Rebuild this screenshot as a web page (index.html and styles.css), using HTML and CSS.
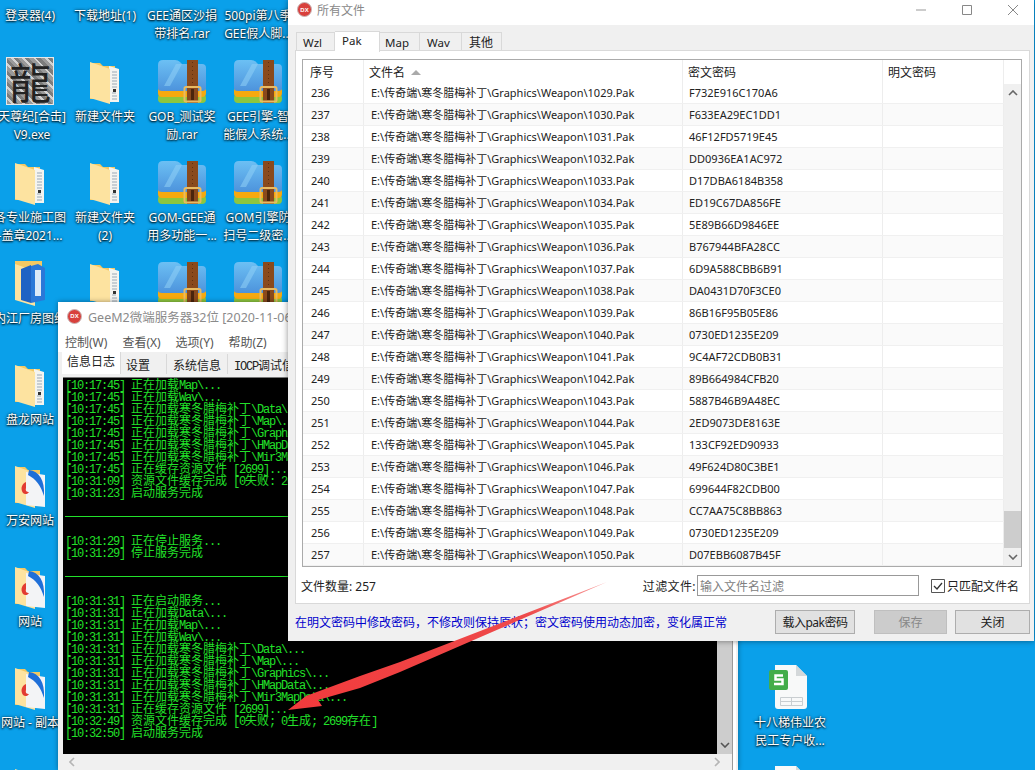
FILE: index.html
```html
<!DOCTYPE html>
<html lang="zh-CN">
<head>
<meta charset="utf-8">
<title>所有文件</title>
<link rel="stylesheet" href="styles.css">
</head>
<body>
<svg class="defs" width="0" height="0" aria-hidden="true">
  <defs>
    <linearGradient id="rarBlue" x1="0" y1="0" x2="0" y2="1"><stop offset="0" stop-color="#6cc0f4"/><stop offset="1" stop-color="#4d93dc"/></linearGradient>
    <symbol id="folder" viewBox="0 0 48 48">
      <path d="M9 5h10l3 3h12v33H9z" fill="#f3c863"/>
      <path d="M28 8l10 3v33H28z" fill="#f4f4f0"/>
      <path d="M31 14h5M31 17h5M31 20h5M31 23h5M31 26h5M31 29h5M31 35h4M31 38h5M31 41h5" stroke="#9aa7b5" stroke-width="1.2"/>
      <path d="M32 31h3v3h-3z" fill="#333"/>
      <path d="M9 4l20 7v35L9 40z" fill="#fde3a0"/>
    </symbol>
    <symbol id="rar" viewBox="0 0 48 48">
      <rect x="0" y="36" width="48" height="9" rx="4" fill="#8dc63f"/>
      <rect x="0" y="29" width="48" height="10" rx="4" fill="#f6a90f"/>
      <path d="M0 7q0-5 5-5h12q3 0 5 2l2 2h20q4 0 4 4v20q0 3-4 3H4q-4 0-4-3z" fill="url(#rarBlue)"/>
      <path d="M18 6L6 28h6L24 6z" fill="#8fd0f6" opacity=".55"/>
      <rect x="29" y="2" width="11" height="43" fill="#8a4a1c"/>
      <path d="M34.500 4v22" stroke="#5d2f10" stroke-dasharray="1 3"/>
      <rect x="26.500" y="29" width="16" height="14.500" rx="1.500" fill="none" stroke="#e9bb62" stroke-width="2"/>
      <rect x="33" y="31" width="3" height="11" fill="#4a240c"/>
    </symbol>
    <symbol id="site" viewBox="0 0 48 48">
      <path d="M9 5h10l3 3h12v33H9z" fill="#f3c863"/>
      <path d="M9 4l20 7v35L9 40z" fill="#fde3a0"/>
      <path d="M20 10l19 3v32l-19-2z" fill="#f3f4f6"/>
      <path d="M23 8c10 1 16 10 15 26-3-10-8-17-16-21z" fill="#1f6fd8"/>
      <path d="M20 20c-4 2-6 6-3 11 2 2 5 1 6-1-2 0-4-1-3-4z" fill="#e23b32"/>
    </symbol>
    <symbol id="docs" viewBox="0 0 48 48">
      <path d="M9 1h27v34H9z" fill="#f3c863"/>
      <path d="M9 4l20 7v35L9 40z" fill="#fde3a0"/>
      <path d="M15 9l10-4v38l-10-3z" fill="#1f63c4"/>
      <path d="M25 6l7-2 7 4v32l-14 3z" fill="#2a78d8"/>
      <path d="M29 10h6v26h-6z" fill="#dbe9f8"/>
    </symbol>
    <symbol id="sheet" viewBox="0 0 48 48">
      <path d="M9 1h21l11 11v30q0 3-3 3H12q-3 0-3-3z" fill="#f8f9f9"/>
      <path d="M30 1l11 11H30z" fill="#d4d8da"/>
      <rect x="3" y="6" width="19" height="20" rx="2" fill="#43ad4a"/>
      <path d="M17 11.500H9.500v4h7v4.500H8" fill="none" stroke="#fff" stroke-width="2.500"/>
      <path d="M14.500 33.500h22v8h-22zM14.500 37.500h22M25.500 33.500v8" fill="none" stroke="#c9ced1"/>
    </symbol>
  </defs>
</svg>

<main class="desktop">
  <div class="tile c1 r1"><span class="label">登录器(4)</span></div>
  <div class="tile c2 r1"><span class="label">下载地址(1)</span></div>
  <div class="tile c3 r1"><span class="label">GEE通区沙捐<br>带排名.rar</span></div>
  <div class="tile c4 r1"><span class="label">500pi第八季<br>GEE假人脚...</span></div>

  <div class="tile c1 r2"><div class="dragon">龍</div><span class="label nudge">天尊纪[合击]<br>V9.exe</span></div>
  <div class="tile c2 r2"><svg class="ico"><use href="#folder"/></svg><span class="label">新建文件夹</span></div>
  <div class="tile c3 r2"><svg class="ico"><use href="#rar"/></svg><span class="label">GOB_测试奖<br>励.rar</span></div>
  <div class="tile c4 r2"><svg class="ico"><use href="#rar"/></svg><span class="label">GEE引擎-智<br>能假人系统...</span></div>

  <div class="tile c1 r3"><svg class="ico"><use href="#folder"/></svg><span class="label">各专业施工图<br>-盖章2021...</span></div>
  <div class="tile c2 r3"><svg class="ico"><use href="#folder"/></svg><span class="label">新建文件夹<br>(2)</span></div>
  <div class="tile c3 r3"><svg class="ico"><use href="#rar"/></svg><span class="label">GOM-GEE通<br>用多功能一...</span></div>
  <div class="tile c4 r3"><svg class="ico"><use href="#rar"/></svg><span class="label">GOM引擎防<br>扫号二级密...</span></div>

  <div class="tile c1 r4"><svg class="ico"><use href="#docs"/></svg><span class="label">内江厂房图纸</span></div>
  <div class="tile c2 r4"><svg class="ico"><use href="#folder"/></svg></div>
  <div class="tile c3 r4"><svg class="ico"><use href="#rar"/></svg></div>
  <div class="tile c4 r4"><svg class="ico"><use href="#rar"/></svg></div>

  <div class="tile c1 r5"><svg class="ico"><use href="#folder"/></svg><span class="label">盘龙网站</span></div>
  <div class="tile c1 r6"><svg class="ico"><use href="#site"/></svg><span class="label">万安网站</span></div>
  <div class="tile c1 r7"><svg class="ico"><use href="#site"/></svg><span class="label">网站</span></div>
  <div class="tile c1 r8"><svg class="ico"><use href="#site"/></svg><span class="label">网站 - 副本</span></div>
  <div class="tile c1 r9"><svg class="ico"><use href="#folder"/></svg></div>
  <div class="tile c5 r8"><svg class="ico"><use href="#sheet"/></svg><span class="label">十八梯伟业农<br>民工专户收...</span></div>
  <div class="tile c5 r9"><svg class="ico"><use href="#sheet"/></svg></div>

  <section class="server">
    <header class="server-title"><span class="dx">DX</span><span>GeeM2微端服务器32位 [2020-11-06</span></header>
    <nav class="server-menu"><span>控制(W)</span><span>查看(X)</span><span>选项(Y)</span><span>帮助(Z)</span></nav>
    <div class="server-tabs">
      <span class="stab stab-on">信息日志</span><span class="stab stab-2">设置</span><span class="stab stab-3">系统信息</span><span class="stab stab-4"><span class="mono">IOCP</span>调试信息</span>
    </div>
    <div class="server-body">
      <div class="console">
        <div class="l">[10:17:45] <b>正在加载</b>Map\...</div>
        <div class="l">[10:17:45] <b>正在加载</b>Wav\...</div>
        <div class="l">[10:17:45] <b>正在加载寒冬腊梅补丁</b>\Data\...</div>
        <div class="l">[10:17:45] <b>正在加载寒冬腊梅补丁</b>\Map\...</div>
        <div class="l">[10:17:45] <b>正在加载寒冬腊梅补丁</b>\Graphics\...</div>
        <div class="l">[10:17:45] <b>正在加载寒冬腊梅补丁</b>\HMapData\...</div>
        <div class="l">[10:17:45] <b>正在加载寒冬腊梅补丁</b>\Mir3MapData\...</div>
        <div class="l">[10:17:45] <b>正在缓存资源文件</b> [2699]...</div>
        <div class="l">[10:31:09] <b>资源文件缓存完成</b> [0<b>失败</b>: 2699<b>生成</b>]</div>
        <div class="l">[10:31:23] <b>启动服务完成</b></div>
        <div class="l"></div>
        <div class="l rule"></div>
        <div class="l"></div>
        <div class="l">[10:31:29] <b>正在停止服务</b>...</div>
        <div class="l">[10:31:29] <b>停止服务完成</b></div>
        <div class="l"></div>
        <div class="l rule"></div>
        <div class="l"></div>
        <div class="l">[10:31:31] <b>正在启动服务</b>...</div>
        <div class="l">[10:31:31] <b>正在加载</b>Data\...</div>
        <div class="l">[10:31:31] <b>正在加载</b>Map\...</div>
        <div class="l">[10:31:31] <b>正在加载</b>Wav\...</div>
        <div class="l">[10:31:31] <b>正在加载寒冬腊梅补丁</b>\Data\...</div>
        <div class="l">[10:31:31] <b>正在加载寒冬腊梅补丁</b>\Map\...</div>
        <div class="l">[10:31:31] <b>正在加载寒冬腊梅补丁</b>\Graphics\...</div>
        <div class="l">[10:31:31] <b>正在加载寒冬腊梅补丁</b>\HMapData\...</div>
        <div class="l">[10:31:31] <b>正在加载寒冬腊梅补丁</b>\Mir3MapData\...</div>
        <div class="l">[10:31:31] <b>正在缓存资源文件</b> [2699]...</div>
        <div class="l">[10:32:49] <b>资源文件缓存完成</b> [0<b>失败</b>; 0<b>生成</b>; 2699<b>存在</b>]</div>
        <div class="l">[10:32:50] <b>启动服务完成</b></div>
      </div>
      <div class="vbar"><svg class="chev" width="10" height="6" viewBox="0 0 10 6"><path d="M1 1l4 4 4-4" fill="none" stroke="#555" stroke-width="1.600"/></svg></div>
    </div>
    <div class="hbar">
      <svg width="6" height="10" viewBox="0 0 6 10"><path d="M5 1L1 5l4 4" fill="none" stroke="#b5b5b5" stroke-width="1.600"/></svg>
      <svg width="6" height="10" viewBox="0 0 6 10"><path d="M1 1l4 4-4 4" fill="none" stroke="#b5b5b5" stroke-width="1.600"/></svg>
    </div>
  </section>

  <section class="files">
    <header class="titlebar">
      <span class="dx">DX</span><span class="title-text">所有文件</span>
      <span class="winbtns">
        <svg width="12" height="12" viewBox="0 0 12 12"><path d="M1 6h10" stroke="#999"/></svg>
        <svg width="12" height="12" viewBox="0 0 12 12"><path d="M1.500 1.500h9v9h-9z" fill="none" stroke="#888"/></svg>
        <svg width="12" height="12" viewBox="0 0 12 12"><path d="M1 1l10 10M11 1L1 11" stroke="#888"/></svg>
      </span>
    </header>
    <div class="files-body">
      <div class="tabs">
        <span class="tab tab-wzl">Wzl</span><span class="tab tab-on">Pak</span><span class="tab tab-map">Map</span><span class="tab tab-wav">Wav</span><span class="tab tab-oth">其他</span>
      </div>
      <div class="panel">
        <div class="list">
          <div class="table">
            <div class="row head"><span class="c-no">序号</span><span class="c-name">文件名<i class="sort"></i></span><span class="c-enc">密文密码</span><span class="c-plain">明文密码</span></div>
            <div class="row"><span class="c-no">236</span><span class="c-name">E:\传奇端\寒冬腊梅补丁\Graphics\Weapon\1029.Pak</span><span class="c-enc">F732E916C170A6</span><span class="c-plain"></span></div>
            <div class="row"><span class="c-no">237</span><span class="c-name">E:\传奇端\寒冬腊梅补丁\Graphics\Weapon\1030.Pak</span><span class="c-enc">F633EA29EC1DD1</span><span class="c-plain"></span></div>
            <div class="row"><span class="c-no">238</span><span class="c-name">E:\传奇端\寒冬腊梅补丁\Graphics\Weapon\1031.Pak</span><span class="c-enc">46F12FD5719E45</span><span class="c-plain"></span></div>
            <div class="row"><span class="c-no">239</span><span class="c-name">E:\传奇端\寒冬腊梅补丁\Graphics\Weapon\1032.Pak</span><span class="c-enc">DD0936EA1AC972</span><span class="c-plain"></span></div>
            <div class="row"><span class="c-no">240</span><span class="c-name">E:\传奇端\寒冬腊梅补丁\Graphics\Weapon\1033.Pak</span><span class="c-enc">D17DBA6184B358</span><span class="c-plain"></span></div>
            <div class="row"><span class="c-no">241</span><span class="c-name">E:\传奇端\寒冬腊梅补丁\Graphics\Weapon\1034.Pak</span><span class="c-enc">ED19C67DA856FE</span><span class="c-plain"></span></div>
            <div class="row"><span class="c-no">242</span><span class="c-name">E:\传奇端\寒冬腊梅补丁\Graphics\Weapon\1035.Pak</span><span class="c-enc">5E89B66D9846EE</span><span class="c-plain"></span></div>
            <div class="row"><span class="c-no">243</span><span class="c-name">E:\传奇端\寒冬腊梅补丁\Graphics\Weapon\1036.Pak</span><span class="c-enc">B767944BFA28CC</span><span class="c-plain"></span></div>
            <div class="row"><span class="c-no">244</span><span class="c-name">E:\传奇端\寒冬腊梅补丁\Graphics\Weapon\1037.Pak</span><span class="c-enc">6D9A588CBB6B91</span><span class="c-plain"></span></div>
            <div class="row"><span class="c-no">245</span><span class="c-name">E:\传奇端\寒冬腊梅补丁\Graphics\Weapon\1038.Pak</span><span class="c-enc">DA0431D70F3CE0</span><span class="c-plain"></span></div>
            <div class="row"><span class="c-no">246</span><span class="c-name">E:\传奇端\寒冬腊梅补丁\Graphics\Weapon\1039.Pak</span><span class="c-enc">86B16F95B05E86</span><span class="c-plain"></span></div>
            <div class="row"><span class="c-no">247</span><span class="c-name">E:\传奇端\寒冬腊梅补丁\Graphics\Weapon\1040.Pak</span><span class="c-enc">0730ED1235E209</span><span class="c-plain"></span></div>
            <div class="row"><span class="c-no">248</span><span class="c-name">E:\传奇端\寒冬腊梅补丁\Graphics\Weapon\1041.Pak</span><span class="c-enc">9C4AF72CDB0B31</span><span class="c-plain"></span></div>
            <div class="row"><span class="c-no">249</span><span class="c-name">E:\传奇端\寒冬腊梅补丁\Graphics\Weapon\1042.Pak</span><span class="c-enc">89B664984CFB20</span><span class="c-plain"></span></div>
            <div class="row"><span class="c-no">250</span><span class="c-name">E:\传奇端\寒冬腊梅补丁\Graphics\Weapon\1043.Pak</span><span class="c-enc">5887B46B9A48EC</span><span class="c-plain"></span></div>
            <div class="row"><span class="c-no">251</span><span class="c-name">E:\传奇端\寒冬腊梅补丁\Graphics\Weapon\1044.Pak</span><span class="c-enc">2ED9073DE8163E</span><span class="c-plain"></span></div>
            <div class="row"><span class="c-no">252</span><span class="c-name">E:\传奇端\寒冬腊梅补丁\Graphics\Weapon\1045.Pak</span><span class="c-enc">133CF92ED90933</span><span class="c-plain"></span></div>
            <div class="row"><span class="c-no">253</span><span class="c-name">E:\传奇端\寒冬腊梅补丁\Graphics\Weapon\1046.Pak</span><span class="c-enc">49F624D80C3BE1</span><span class="c-plain"></span></div>
            <div class="row"><span class="c-no">254</span><span class="c-name">E:\传奇端\寒冬腊梅补丁\Graphics\Weapon\1047.Pak</span><span class="c-enc">699644F82CDB00</span><span class="c-plain"></span></div>
            <div class="row"><span class="c-no">255</span><span class="c-name">E:\传奇端\寒冬腊梅补丁\Graphics\Weapon\1048.Pak</span><span class="c-enc">CC7AA75C8BB863</span><span class="c-plain"></span></div>
            <div class="row"><span class="c-no">256</span><span class="c-name">E:\传奇端\寒冬腊梅补丁\Graphics\Weapon\1049.Pak</span><span class="c-enc">0730ED1235E209</span><span class="c-plain"></span></div>
            <div class="row"><span class="c-no">257</span><span class="c-name">E:\传奇端\寒冬腊梅补丁\Graphics\Weapon\1050.Pak</span><span class="c-enc">D07EBB6087B45F</span><span class="c-plain"></span></div>
          </div>
          <div class="scroll">
            <svg class="chev" width="10" height="6" viewBox="0 0 10 6"><path d="M1 5l4-4 4 4" fill="none" stroke="#666" stroke-width="1.600"/></svg>
            <span class="thumb"></span>
            <svg class="chev" width="10" height="6" viewBox="0 0 10 6"><path d="M1 1l4 4 4-4" fill="none" stroke="#666" stroke-width="1.600"/></svg>
          </div>
        </div>
        <div class="status">
          <span class="count">文件数量: 257</span>
          <label class="filter-label" for="flt">过滤文件:</label>
          <input class="filter" id="flt" placeholder="输入文件名过滤">
          <span class="check"><svg width="14" height="14" viewBox="0 0 14 14"><path d="M.5.500h13v13H.5z" fill="#fff" stroke="#555"/><path d="M3 7l3 3 5-6" fill="none" stroke="#333" stroke-width="1.300"/></svg>只匹配文件名</span>
        </div>
      </div>
      <div class="footer">
        <span class="hint">在明文密码中修改密码，不修改则保持原状；密文密码使用动态加密，变化属正常</span>
        <button class="btn btn-load">载入pak密码</button>
        <button class="btn btn-save" disabled>保存</button>
        <button class="btn btn-close">关闭</button>
      </div>
    </div>
  </section>

  <svg class="arrow" width="1035" height="770" viewBox="0 0 1035 770" aria-hidden="true">
    <defs><linearGradient id="tail" x1="1" y1="0" x2="0" y2="1"><stop offset="0" stop-color="#f9a0a0"/><stop offset=".25" stop-color="#ee4a4a"/><stop offset="1" stop-color="#f23a3c"/></linearGradient></defs>
    <polygon points="607,582 400,662 360,676 306,696 288,710 322,706 318,700 360,688 400,672" fill="url(#tail)"/>
  </svg>
</main>
</body>
</html>
```
FILE: styles.css
```css
* { box-sizing: border-box; }
html, body { margin: 0; height: 100%; }
body { overflow: hidden; font-family: "Noto Sans", "Noto Sans CJK SC", sans-serif; font-size: 12px; color: #222; }
.defs { position: absolute; }

.desktop { position: relative; width: 1035px; height: 770px; overflow: hidden; background: #0aa0ea; }

/* desktop icons sit on a free canvas */
.tile { position: absolute; width: 80px; display: flex; flex-direction: column; align-items: center; }
.c1 { left: -10px; } .c2 { left: 65px; } .c3 { left: 142px; } .c4 { left: 218px; } .c5 { left: 750px; }
.r1 { top: -45px; } .r2 { top: 56px; } .r3 { top: 157px; } .r4 { top: 258px; } .r5 { top: 359px; }
.r6 { top: 460px; } .r7 { top: 561px; } .r8 { top: 662px; } .r9 { top: 763px; }
.ico { width: 48px; height: 48px; margin-top: 2px; margin-bottom: 2px; flex: none; }
.label { display: block; width: 90px; flex: none; text-align: center; line-height: 18px; color: #fff; white-space: nowrap; text-shadow: 0 1px 2px #000, 0 0 3px rgba(0,0,0,.7); }
.tile > .label:first-child { margin-top: 52px; }
.nudge { padding-left: 4px; }
.dragon { width: 48px; height: 48px; margin-top: 1px; margin-bottom: 3px; background: repeating-linear-gradient(45deg, #9a9a9a 0 3px, #d2d2d2 3px 5px, #7c7c7c 5px 8px); border: 1px solid #e8e8e8; color: #222; font: 400 42px/46px "Noto Sans CJK TC", sans-serif; text-align: center; overflow: hidden; }

.dx { display: inline-flex; align-items: center; justify-content: center; width: 15px; height: 15px; border-radius: 50%; background: #d8403c; border: 1px solid #c9b6b6; color: #fff; font: 700 6px/1 "Liberation Sans", sans-serif; flex: none; }

/* back window */
.server { position: absolute; left: 58px; top: 302px; width: 680px; height: 468px; background: #f0f0f0; box-shadow: 0 0 5px rgba(0,0,0,.4); display: flex; flex-direction: column; }
.server-title { height: 28px; background: #fff; display: flex; align-items: center; gap: 6px; padding: 0 0 0 9px; color: #8a8a8a; font-size: 12.500px; white-space: nowrap; overflow: hidden; flex: none; }
.server-menu { height: 22px; background: #fff; display: flex; gap: 15px; align-items: center; padding: 2px 0 0 7px; color: #555; flex: none; }
.server-tabs { height: 22px; display: flex; align-items: flex-end; padding-left: 4px; background: #f0f0f0; flex: none; overflow: hidden; }
.stab { height: 20px; line-height: 23px; text-align: center; background: #f0f0f0; border-right: 1px solid #d9d9d9; color: #222; flex: none; white-space: nowrap; }
.stab-on { height: 22px; width: 59px; line-height: 20px; background: #fff; }
.stab-2 { width: 46px; text-align: left; padding-left: 5px; } .stab-3 { width: 61px; } .stab-4 { width: 90px; text-align: left; padding-left: 6px; }
.mono { font: 12px "Liberation Mono", monospace; letter-spacing: -1.2px; }
.server-body { position: relative; margin: 3px 2px 0 5px; display: flex; flex: 1; min-height: 0; }
.console { width: 654px; height: 377px; padding: 0 0 0 2px; background: #000; color: #22e02a; border-top: 1px solid #777; overflow: hidden; flex: none; }
.l { height: 12px; line-height: 12px; white-space: pre; font: 12px/12px "Liberation Mono", monospace; letter-spacing: -1.2px; }
.l b { font: 400 12px/12px "Noto Sans CJK SC", sans-serif; letter-spacing: 0; }
.rule { position: relative; }
.rule::after { content: ""; position: absolute; left: 0; right: 0; top: 6px; border-top: 1px solid #22e02a; }
.vbar { width: 15px; height: 377px; background: #cdcdcd; display: flex; flex-direction: column; align-items: center; justify-content: flex-end; flex: none; }
.vbar .chev { margin-bottom: 6px; }
.server-body::after { content: ""; position: absolute; right: 0; top: -3px; bottom: -16px; width: 3px; background: #fff; border-left: 1px solid #999; }
.hbar { height: 16px; margin: 0 5px; display: flex; justify-content: space-between; align-items: center; padding: 0 8px 0 6px; width: 665px; flex: none; }

/* main window */
.files { position: absolute; left: 288px; top: 0; width: 746px; height: 641px; background: #f0f0f0; box-shadow: 0 0 6px rgba(0,0,0,.45); display: flex; flex-direction: column; }
.titlebar { height: 25px; background: #fff; display: flex; align-items: center; gap: 5px; padding: 0 0 6px 9px; color: #888; flex: none; }
.winbtns { margin-left: auto; display: flex; gap: 34px; padding-right: 15px; }
.files-body { flex: 1; display: flex; flex-direction: column; padding: 0 4px 0 7px; min-height: 0; }
.tabs { height: 26px; display: flex; align-items: flex-end; padding-left: 1px; flex: none; position: relative; z-index: 1; margin-bottom: -1px; }
.tab { width: 40px; height: 19px; line-height: 20px; padding-left: 5px; font-size: 11.500px; background: #f0f0f0; border: 1px solid #d9d9d9; border-left: 0; flex: none; }
.tab-wzl { width: 39px; border-left: 1px solid #d9d9d9; padding-left: 6px; }
.tab-on { width: 45px; height: 21px; line-height: 18px; padding-left: 7px; background: #fff; border-bottom: 0; margin-bottom: -1px; }
.tab-wav { width: 42px; padding-left: 7px; }
.tab-oth { padding-left: 7px; font-size: 12px; }
.panel { height: 554px; background: #fff; border: 1px solid #d9d9d9; padding: 8px 7px 0 6px; display: flex; flex-direction: column; flex: none; }
.list { height: 508px; border: 1px solid #aaa; display: flex; flex: none; background: #fff; }
.table { width: 701px; flex: none; }
.row { display: grid; grid-template-columns: 61px 319px 200px 121px; height: 22px; line-height: 21px; border-bottom: 1px solid #f0f0f0; font-size: 11px; }
.row:nth-child(odd) { background: #fafafa; }
.row.head { background: #fff; border-bottom: 0; font-size: 12px; line-height: 26px; }
.row > span { border-right: 1px solid #ededed; white-space: nowrap; overflow: hidden; }
.c-no { padding-left: 8px; }
.c-name { padding-left: 7px; }
.c-enc, .c-plain { padding-left: 6px; }
.head .c-no { padding-left: 7px; }
.head .c-name { padding-left: 5px; }
.head .c-enc { padding-left: 5px; }
.head .c-plain { padding-left: 5px; }
.sort { display: inline-block; width: 0; height: 0; margin-left: 6px; vertical-align: 2px; border: 5px solid transparent; border-top: 0; border-bottom: 5px solid #aaa; }
.scroll { width: 17px; margin-top: 24px; background: #f0f0f0; display: flex; flex-direction: column; align-items: center; padding: 6px 0 6px; flex: none; }
.thumb { width: 17px; height: 37px; margin-top: auto; margin-bottom: 6px; background: #cdcdcd; }
.status { height: 37px; display: flex; align-items: center; flex: none; }
.count { flex: 1; margin-left: -1px; }
.filter-label { margin-right: 1px; letter-spacing: .4px; }
.filter { width: 222px; height: 21px; border: 1px solid #999; padding: 0 2px; font: 12px "Noto Sans CJK SC", sans-serif; outline: 0; }
.filter::placeholder { color: #808080; opacity: 1; }
.check { display: flex; align-items: center; gap: 2px; margin-left: 12px; white-space: nowrap; padding-right: 3px; }
.footer { flex: 1; display: flex; align-items: center; min-height: 0; padding-bottom: 2px; }
.hint { color: #0000cc; margin-right: auto; white-space: nowrap; }
.btn { height: 24px; border: 1px solid #adadad; background: #e1e1e1; font: 12px "Noto Sans", "Noto Sans CJK SC", sans-serif; color: #222; padding: 0; flex: none; }
.btn-load { width: 80px; margin-right: 19px; letter-spacing: -.5px; }
.btn-save { width: 73px; margin-right: 8px; background: #ccc; border-color: #bfbfbf; color: #888; }
.btn-close { width: 75px; }

/* annotation over everything */
.arrow { position: absolute; left: 0; top: 0; pointer-events: none; }
```
